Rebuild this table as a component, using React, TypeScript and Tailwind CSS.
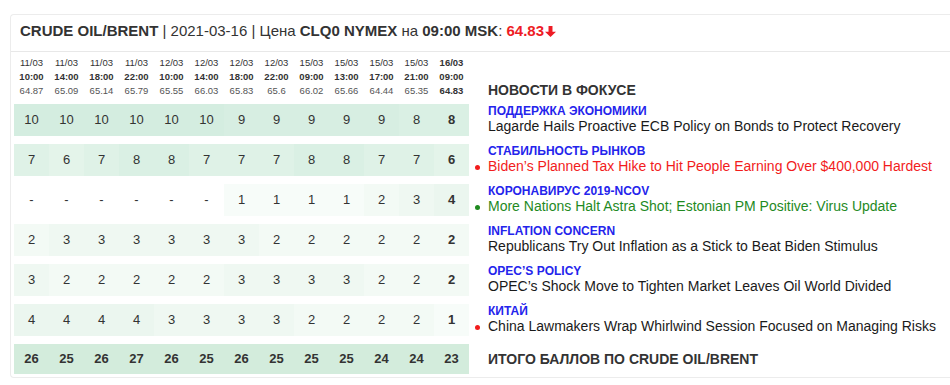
const dates = ["11/03", "11/03", "11/03", "11/03", "12/03", "12/03", "12/03", "12/03", "15/03", "15/03", "15/03", "15/03", "16/03"]
const times = ["10:00", "14:00", "18:00", "22:00", "10:00", "14:00", "18:00", "22:00", "09:00", "13:00", "17:00", "21:00", "09:00"]
const prices = ["64.87", "65.09", "65.14", "65.79", "65.55", "66.03", "65.83", "65.6", "66.02", "65.66", "64.44", "65.35", "64.83"]

type News = {
     topic: string
     title: string
     tone: "plain" | "red" | "green"
     dot?: "red" | "green"
     scores: (number | null)[]
}

const news: News[] = [
     {
          topic: "ПОДДЕРЖКА ЭКОНОМИКИ",
          title: "Lagarde Hails Proactive ECB Policy on Bonds to Protect Recovery",
          tone: "plain",
          scores: [10, 10, 10, 10, 10, 10, 9, 9, 9, 9, 9, 8, 8],
     },
     {
          topic: "СТАБИЛЬНОСТЬ РЫНКОВ",
          title: "Biden’s Planned Tax Hike to Hit People Earning Over $400,000 Hardest",
          tone: "red",
          dot: "red",
          scores: [7, 6, 7, 8, 8, 7, 7, 7, 8, 8, 7, 7, 6],
     },
     {
          topic: "КОРОНАВИРУС 2019-NCOV",
          title: "More Nations Halt Astra Shot; Estonian PM Positive: Virus Update",
          tone: "green",
          dot: "green",
          scores: [null, null, null, null, null, null, 1, 1, 1, 1, 2, 3, 4],
     },
     {
          topic: "INFLATION CONCERN",
          title: "Republicans Try Out Inflation as a Stick to Beat Biden Stimulus",
          tone: "plain",
          scores: [2, 3, 3, 3, 3, 3, 3, 2, 2, 2, 2, 2, 2],
     },
     {
          topic: "OPEC’S POLICY",
          title: "OPEC’s Shock Move to Tighten Market Leaves Oil World Divided",
          tone: "plain",
          scores: [3, 2, 2, 2, 2, 2, 3, 3, 3, 3, 2, 2, 2],
     },
     {
          topic: "КИТАЙ",
          title: "China Lawmakers Wrap Whirlwind Session Focused on Managing Risks",
          tone: "plain",
          dot: "red",
          scores: [4, 4, 4, 4, 3, 3, 3, 3, 2, 2, 2, 2, 1],
     },
]

const totals = [26, 25, 26, 27, 26, 25, 26, 25, 25, 25, 24, 24, 23]

// shade of green by score
const shade: Record<string, string> = {
     "10": "bg-[#d4ede0]",
     "9": "bg-[#d7eee2]",
     "8": "bg-[#daf0e4]",
     "7": "bg-[#dff2e7]",
     "6": "bg-[#e4f4ea]",
     "5": "bg-[#e8f6ed]",
     "4": "bg-[#ebf6ef]",
     "3": "bg-[#eff8f2]",
     "2": "bg-[#f3faf5]",
     "1": "bg-[#f7fcf9]",
     "-": "bg-white",
}

const toneClass = {
     plain: "text-[#1a1a1a]",
     red: "text-[#f21c1c]",
     green: "text-[#1f8a1f]",
}

const DownArrow = () => (
     <svg width="11" height="11" viewBox="0 0 10 10" className="inline-block ml-[1px] -mt-[2px] align-middle">
          <path d="M3.2 0h3.6v5.2H10L5 10 0 5.2h3.2z" fill="#ee1c25" />
     </svg>
)

const App = () => {
     return (
          <div className="w-[950px] h-[385px] overflow-hidden bg-white font-['Liberation_Sans',Arial,sans-serif] text-[#333]">
               <div className="pt-[14px] pl-[10px]">
                    <div className="border border-r-0 border-[#ececec] rounded-l-[4px]">

                         {/* --- TITLE --- */}
                         <div className="px-[9px] pt-[6px] pb-[10px] text-[15px] leading-5 border-b border-[#e8e8e8] whitespace-nowrap">
                              <b>CRUDE OIL/BRENT</b> | 2021-03-16 | Цена <b>CLQ0 NYMEX</b> на <b>09:00 MSK</b>:{" "}
                              <b className="text-[#ee1c25]">64.83</b>
                              <DownArrow />
                         </div>

                         {/* --- TABLE --- */}
                         <div className="pl-[3px] pt-[4px] pb-[3px]">
                              <div className="grid grid-cols-[repeat(13,35px)_1fr] mb-[6px]">
                                   {dates.map((d, i) => (
                                        <div key={i} className={`flex flex-col items-center text-[9.5px] leading-[14px] ${i === 12 ? "font-bold" : ""}`}>
                                             <span>{d}</span>
                                             <span className="font-bold">{times[i]}</span>
                                             <span className={i === 12 ? "text-[#333]" : "text-[#555]"}>{prices[i]}</span>
                                        </div>
                                   ))}
                                   <div className="self-end pl-[19px] text-[14px] leading-4 font-bold">НОВОСТИ В ФОКУСЕ</div>
                              </div>

                              <div className="grid grid-cols-[repeat(13,35px)_1fr] gap-y-2">
                                   {news.map((n) => (
                                        <div key={n.topic} className="contents">
                                             {n.scores.map((s, i) => {
                                                  const key = s === null ? "-" : String(s)
                                                  return (
                                                       <div
                                                            key={i}
                                                            className={`h-8 flex items-center justify-center text-[13px] ${shade[key]} ${i === 12 ? "font-bold" : ""}`}
                                                       >
                                                            {key}
                                                       </div>
                                                  )
                                             })}
                                             <div className="relative h-8 pl-[19px] whitespace-nowrap">
                                                  <div className="text-[12px] leading-[15px] font-bold text-[#2424ec]">{n.topic}</div>
                                                  <div className={`text-[14px] leading-[15px] ${toneClass[n.tone]}`}>{n.title}</div>
                                                  {n.dot && (
                                                       <span
                                                            className={`absolute left-[6px] top-[21px] w-[5px] h-[5px] rounded-full ${n.dot === "red" ? "bg-[#f21c1c]" : "bg-[#1f8a1f]"}`}
                                                       />
                                                  )}
                                             </div>
                                        </div>
                                   ))}

                                   {totals.map((t, i) => (
                                        <div key={i} className="h-[30px] flex items-center justify-center text-[13px] font-bold bg-[#d3ecdc]">
                                             {t}
                                        </div>
                                   ))}
                                   <div className="h-[30px] flex items-center pl-[19px] text-[14px] font-bold whitespace-nowrap">
                                        ИТОГО БАЛЛОВ ПО CRUDE OIL/BRENT
                                   </div>
                              </div>
                         </div>
                    </div>
               </div>
          </div>
     )
}

export default App
